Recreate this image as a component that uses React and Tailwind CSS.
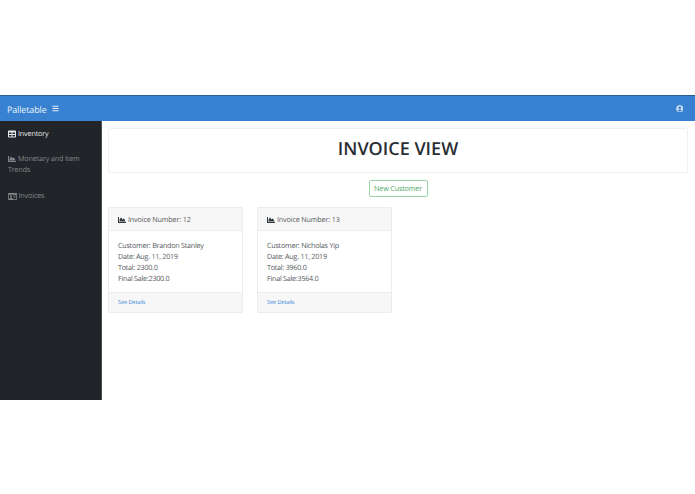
import React from "react";
import { FaBars, FaChartArea, FaRegIdCard, FaTable, FaUserCircle } from "react-icons/fa";

const invoices = [
  { number: 12, customer: "Brandon Stanley", date: "Aug. 11, 2019", total: "2300.0", finalSale: "2300.0" },
  { number: 13, customer: "Nicholas Yip", date: "Aug. 11, 2019", total: "3960.0", finalSale: "3564.0" },
];

function InvoiceCard({ invoice }) {
  return (
    <div className="w-[135px] h-[106px] flex flex-col rounded-[2px] border border-[#ececec] bg-white text-[#54585d]">
      <div className="h-[23px] pt-[2px] flex items-center gap-[2px] px-[9px] bg-[#f7f7f7] border-b border-[#ececec] text-[7.2px]">
        <FaChartArea className="text-[8px] text-[#33383d]" />
        <span>Invoice Number: {invoice.number}</span>
      </div>
      <div className="flex-1 px-[9px] pt-[10px] text-[7.2px] tracking-[-0.25px] leading-[10.9px]">
        <p>Customer: {invoice.customer}</p>
        <p>Date: {invoice.date}</p>
        <p>Total: {invoice.total}</p>
        <p>Final Sale:{invoice.finalSale}</p>
      </div>
      <div className="h-[20px] flex items-center px-[9px] bg-[#f7f7f7] border-t border-[#ececec] text-[5.7px] text-[#3a86d8]">
        See Details
      </div>
    </div>
  );
}

export default function App() {
  return (
    <div className="min-h-[494px] bg-white pt-[95px] font-['Open_Sans',sans-serif] tracking-[-0.15px] antialiased [text-rendering:geometricPrecision]">
      <nav className="h-[26px] flex items-center justify-between pl-[7px] pr-[12px] bg-[#3781d0] border-t border-[#2b5f96] text-[#eaf2fa]">
        <div className="flex items-center gap-[5px]">
          <span className="text-[9px] pt-[2px]">Palletable</span>
          <FaBars className="text-[7px]" />
        </div>
        <FaUserCircle className="text-[7.5px] text-[#c5d9ef]" />
      </nav>

      <div className="h-[279px] flex">
        <aside className="w-[102px] shrink-0 bg-[#212529] border-r border-[#4a4d52] pl-[8px] pr-[4px] text-[7.2px] text-[#85888b]">
          <div className="h-[26px] flex items-center gap-[1.5px] text-[#e8e9ea]">
            <FaTable className="text-[8px] mr-[0.5px]" />
            <span>Inventory</span>
          </div>
          <div className="mt-[7px] leading-[11px] w-[85px]">
            <FaChartArea className="inline text-[8px] mr-[2px] -mt-[1px]" />
            Monetary and Item Trends
          </div>
          <div className="mt-[15px] flex items-center gap-[1px]">
            <FaRegIdCard className="text-[9px] mr-[0.5px]" />
            <span>Invoices</span>
          </div>
        </aside>

        <main className="flex-1 pl-[6px] pr-[7px] pt-[7px]">
          <div className="h-[45px] pb-[2px] flex items-center justify-center rounded-[2px] border border-[#f0f0f0] text-[18px] font-semibold tracking-normal text-[#2a2e33]">
            INVOICE VIEW
          </div>
          <div className="mt-[7px] flex justify-center">
            <button className="w-[59px] h-[17px] rounded-[2px] border border-[#9cd3ac] text-[7.2px] text-[#4fa668]">
              New Customer
            </button>
          </div>
          <div className="mt-[10px] flex gap-[14px]">
            {invoices.map((invoice) => (
              <InvoiceCard key={invoice.number} invoice={invoice} />
            ))}
          </div>
        </main>
      </div>
    </div>
  );
}
